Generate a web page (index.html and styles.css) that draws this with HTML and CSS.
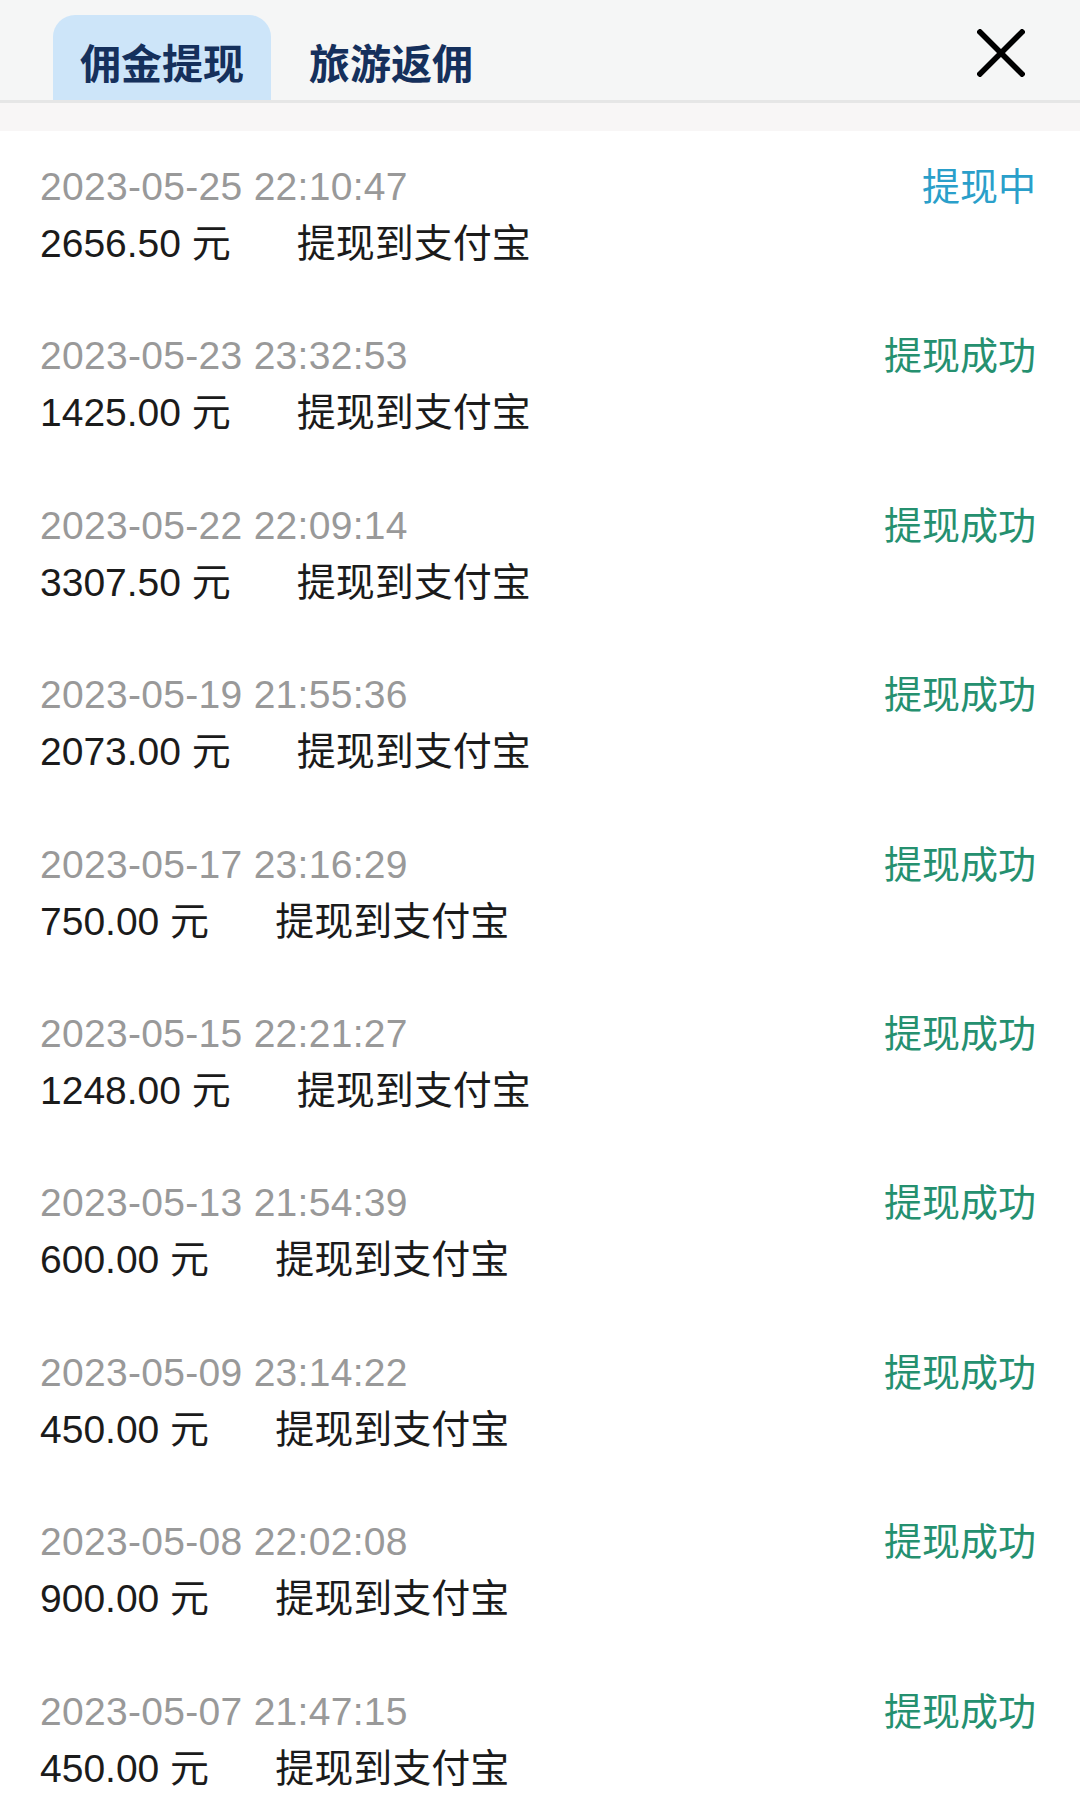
FILE: index.html
```html
<!DOCTYPE html>
<html lang="zh-CN">
<head>
<meta charset="utf-8">
<title>佣金提现</title>
<link rel="stylesheet" href="styles.css">
</head>
<body>
<div class="page">
  <header class="header">
    <nav class="tabs">
      <div class="tab tab-active">佣金提现</div>
      <div class="tab">旅游返佣</div>
    </nav>
    <button class="close" aria-label="关闭">
      <svg width="48" height="48" viewBox="0 0 48 48"><path d="M3 3 L45 45 M45 3 L3 45" stroke="#000" stroke-width="5.5" stroke-linecap="square" fill="none"/></svg>
    </button>
  </header>
  <div class="band"></div>
  <ul class="list">
    <li class="row"><div class="line1"><span class="date">2023-05-25 22:10:47</span><span class="status pending">提现中</span></div><div class="line2"><span class="amount">2656.50 元</span><span class="method">提现到支付宝</span></div></li>
    <li class="row"><div class="line1"><span class="date">2023-05-23 23:32:53</span><span class="status done">提现成功</span></div><div class="line2"><span class="amount">1425.00 元</span><span class="method">提现到支付宝</span></div></li>
    <li class="row"><div class="line1"><span class="date">2023-05-22 22:09:14</span><span class="status done">提现成功</span></div><div class="line2"><span class="amount">3307.50 元</span><span class="method">提现到支付宝</span></div></li>
    <li class="row"><div class="line1"><span class="date">2023-05-19 21:55:36</span><span class="status done">提现成功</span></div><div class="line2"><span class="amount">2073.00 元</span><span class="method">提现到支付宝</span></div></li>
    <li class="row"><div class="line1"><span class="date">2023-05-17 23:16:29</span><span class="status done">提现成功</span></div><div class="line2"><span class="amount">750.00 元</span><span class="method">提现到支付宝</span></div></li>
    <li class="row"><div class="line1"><span class="date">2023-05-15 22:21:27</span><span class="status done">提现成功</span></div><div class="line2"><span class="amount">1248.00 元</span><span class="method">提现到支付宝</span></div></li>
    <li class="row"><div class="line1"><span class="date">2023-05-13 21:54:39</span><span class="status done">提现成功</span></div><div class="line2"><span class="amount">600.00 元</span><span class="method">提现到支付宝</span></div></li>
    <li class="row"><div class="line1"><span class="date">2023-05-09 23:14:22</span><span class="status done">提现成功</span></div><div class="line2"><span class="amount">450.00 元</span><span class="method">提现到支付宝</span></div></li>
    <li class="row"><div class="line1"><span class="date">2023-05-08 22:02:08</span><span class="status done">提现成功</span></div><div class="line2"><span class="amount">900.00 元</span><span class="method">提现到支付宝</span></div></li>
    <li class="row"><div class="line1"><span class="date">2023-05-07 21:47:15</span><span class="status done">提现成功</span></div><div class="line2"><span class="amount">450.00 元</span><span class="method">提现到支付宝</span></div></li>
  </ul>
</div>
</body>
</html>
```
FILE: styles.css
```css
html, body {
  margin: 0;
  padding: 0;
  height: 1805px;
  overflow: hidden;
  background: #ffffff;
}
.page {
  width: 1080px;
  font-family: "Liberation Sans", "Noto Sans CJK SC", sans-serif;
}
.header {
  display: flex;
  height: 100px;
  background: #f5f6f6;
  border-bottom: 3px solid #e6e6e6;
}
.tabs {
  display: flex;
  gap: 11px;
  margin-left: 53px;
  margin-top: 15px;
}
.tab {
  font-family: "Noto Sans CJK SC", sans-serif;
  font-weight: 700;
  font-size: 41px;
  line-height: 41px;
  color: #15305c;
  padding: 26px 27px 18px;
  border-radius: 22px 22px 0 0;
}
.tab-active {
  background: #cde5f9;
}
.close {
  margin-left: auto;
  margin-right: 55px;
  margin-top: 29px;
  align-self: flex-start;
  width: 48px;
  height: 48px;
  padding: 0;
  border: 0;
  background: transparent;
  display: block;
}
.close svg {
  display: block;
}
.band {
  height: 28px;
  background: #f8f6f6;
}
.list {
  list-style: none;
  margin: 0;
  padding: 0;
}
.row {
  height: 169.4px;
  box-sizing: border-box;
  padding: 32px 44px 0 40px;
}
.line1 {
  display: flex;
  justify-content: space-between;
  align-items: baseline;
  font-size: 39px;
  line-height: 48px;
}
.date {
  color: #999999;
  letter-spacing: 0.3px;
}
.status {
  font-size: 38px;
}
.pending {
  color: #2a9fca;
}
.done {
  color: #25906f;
}
.line2 {
  display: flex;
  margin-top: 9px;
  font-size: 39px;
  line-height: 48px;
  color: #1b1b1b;
}
.method {
  margin-left: 66px;
}
```
